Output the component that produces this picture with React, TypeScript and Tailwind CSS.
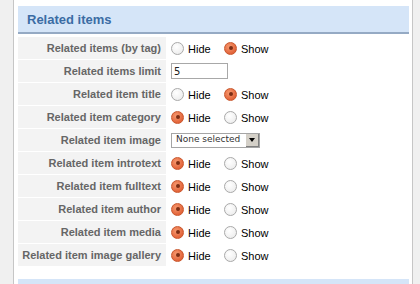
import React from 'react';

type Row = {
  label: string;
  kind: 'radio' | 'input' | 'select';
  show?: boolean;
};

const ROWS: Row[] = [
  { label: 'Related items (by tag)', kind: 'radio', show: true },
  { label: 'Related items limit', kind: 'input' },
  { label: 'Related item title', kind: 'radio', show: true },
  { label: 'Related item category', kind: 'radio', show: false },
  { label: 'Related item image', kind: 'select' },
  { label: 'Related item introtext', kind: 'radio', show: false },
  { label: 'Related item fulltext', kind: 'radio', show: false },
  { label: 'Related item author', kind: 'radio', show: false },
  { label: 'Related item media', kind: 'radio', show: false },
  { label: 'Related item image gallery', kind: 'radio', show: false },
];

function Radio({ checked }: { checked: boolean }) {
  if (checked) {
    return (
      <span className="w-[13px] h-[13px] rounded-full border border-[#c9572d] bg-[radial-gradient(circle_at_40%_35%,#f79a70,#e2643a_70%)] flex items-center justify-center shrink-0">
        <span className="w-[4px] h-[4px] rounded-full bg-[#7c2d14]" />
      </span>
    );
  }
  return (
    <span className="w-[13px] h-[13px] rounded-full border border-[#a9a9a9] bg-[radial-gradient(circle_at_40%_35%,#ffffff,#eeeeee_75%)] shrink-0" />
  );
}

function RadioPair({ show }: { show: boolean }) {
  return (
    <div className="flex items-center">
      <Radio checked={!show} />
      <span className="ml-[4px] mt-[3px] w-[36px] text-black">Hide</span>
      <Radio checked={show} />
      <span className="ml-[4px] mt-[3px] text-black">Show</span>
    </div>
  );
}

export default function App() {
  return (
    <div className="w-[420px] h-[284px] bg-[#f0f0f0] flex overflow-hidden font-['Liberation_Sans',Arial,sans-serif]">
      <div className="ml-[13px] w-[400px] h-full bg-white border-x border-[#c6c6c6] pt-[6px] pl-[4px] pr-[3px]">
        {/* Section header */}
        <div className="h-[28px] bg-[#d5e5f8] border-b-2 border-[#95aac4] flex items-center pl-[9px] pt-[1px] text-[13px] font-bold text-[#3b6ca4]">
          Related items
        </div>

        {/* Params table */}
        <div className="mt-[3px] text-[11px]">
          {ROWS.map((row) => (
            <div key={row.label} className="flex h-[22px] mb-[1px]">
              <div className="w-[148px] bg-[#f3f3f3] flex items-center justify-end pr-[5px] font-bold text-[#666666] whitespace-nowrap">
                {row.label}
              </div>
              <div className="flex-1 flex items-center pl-[5px]">
                {row.kind === 'radio' && <RadioPair show={!!row.show} />}
                {row.kind === 'input' && (
                  <div className="w-[57px] h-[16px] border border-[#a8a8a8] flex items-center pl-[2px] pt-[1px] text-[#222] font-['DejaVu_Sans',sans-serif] text-[10px]">
                    5
                  </div>
                )}
                {row.kind === 'select' && (
                  <div className="w-[89px] h-[15px] border border-[#a5a5a5] flex items-center justify-between font-['DejaVu_Sans',sans-serif] text-[9px] text-[#333] whitespace-nowrap">
                    <span className="pl-[4px]">None selected</span>
                    <span className="w-[13px] h-[13px] shrink-0 bg-[#d4d0c8] border-r border-b border-[#808080] flex items-center justify-center">
                      <span className="w-0 h-0 border-l-[3px] border-r-[3px] border-t-[4px] border-l-transparent border-r-transparent border-t-black" />
                    </span>
                  </div>
                )}
              </div>
            </div>
          ))}
        </div>

        {/* Next section header */}
        <div className="mt-[13px] h-[28px] bg-[#d5e5f8]" />
      </div>
    </div>
  );
}
